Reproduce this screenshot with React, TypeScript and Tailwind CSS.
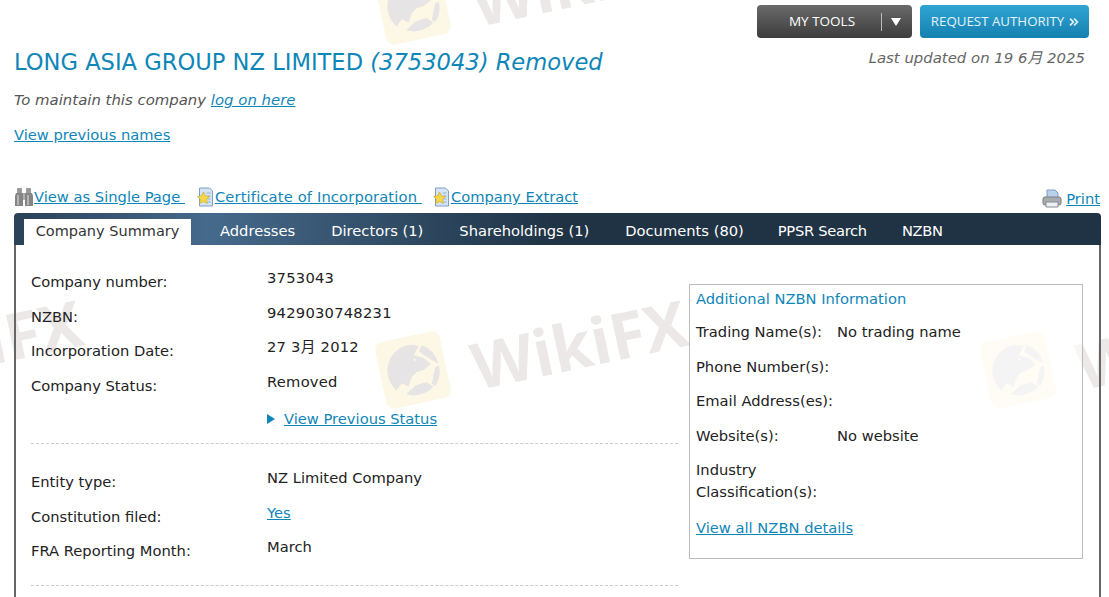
import { ChevronsRight } from "lucide-react";

const summaryRows = [
    { label: "Company number:", value: "3753043" },
    { label: "NZBN:", value: "9429030748231" },
    { label: "Incorporation Date:", value: "27 3月 2012" },
    { label: "Company Status:", value: "Removed" },
]

const entityRows = [
    { label: "Entity type:", value: "NZ Limited Company" },
    { label: "Constitution filed:", value: "Yes", link: true },
    { label: "FRA Reporting Month:", value: "March" },
]

const tabs = [
    { name: "Addresses", className: "" },
    { name: "Directors (1)", className: "" },
    { name: "Shareholdings (1)", className: "" },
    { name: "Documents (80)", className: "" },
    { name: "PPSR Search", className: "-ml-[2px] tracking-[-0.3px]" },
    { name: "NZBN", className: "-ml-[1px] tracking-[-0.3px]" },
]

function Eagle({ className }: { className: string }) {
    return (
        <div className={`absolute h-[68px] w-[66px] rotate-[-12deg] rounded-lg bg-[#fdf7e6] ${className}`}>
            <svg viewBox="0 0 66 70" className="h-full w-full" fill="#e6e4e4">
                <path d="M30 9A27 27 0 0 0 12 52l7-6 6 5 5-9 6-4 8-1 8-4-5-7-10-6 7-8a27 27 0 0 0-14-3z" />
                <path d="M47 12a27 27 0 0 1 13 22l-6-5-11-11z" />
                <path d="M60 36a27 27 0 0 1-8 20l-3-3 7-16z" />
                <path d="M21 58a27 27 0 0 0 29-2l-6-6-12 1z" />
                <circle cx="37" cy="25" r="1.2" fill="#fdf7e6" />
            </svg>
        </div>
    )
}

function Watermark({ className }: { className: string }) {
    return (
        <div className={`absolute font-['Open_Sans',sans-serif] text-[64px] leading-none font-bold whitespace-nowrap text-[#ebe8e7] rotate-[-12deg] ${className}`}>
            WikiFX
        </div>
    )
}

function DocIcon() {
    return (
        <svg viewBox="0 0 18 20" className="h-[20px] w-[19px] shrink-0">
            <path d="M3 1h10l3 3v15H3z" fill="#d5e4f5" stroke="#7f9fc6" />
            <path d="M10 6h4M11 9h3M11 12h3M11 15h3" stroke="#8fb0d6" />
            <path d="M7 5l2 4 4 .5-3 3 1 4-4-2-4 2 1-4-3-3 4-.5z" fill="#f5d84a" stroke="#c8a21c" strokeWidth="0.6" />
        </svg>
    )
}

function BinocularsIcon() {
    return (
        <svg viewBox="0 0 20 20" className="h-[20px] w-[20px] shrink-0">
            <rect x="3" y="1" width="5" height="6" rx="1" fill="#9a9a9a" />
            <rect x="12" y="1" width="5" height="6" rx="1" fill="#9a9a9a" />
            <path d="M2 6h7v13H1V9z" fill="#858585" />
            <path d="M11 6h7l1 3v10h-8z" fill="#858585" />
            <path d="M3 8h2v10H3zM13 8h2v10h-2z" fill="#b5b5b5" />
            <rect x="9" y="6" width="2" height="7" fill="#b0b0b0" />
        </svg>
    )
}

function PrintIcon() {
    return (
        <svg viewBox="0 0 20 20" className="h-[20px] w-[20px] shrink-0">
            <path d="M5 1h8l3 3v5H5z" fill="#b9d0ea" stroke="#7f9cbd" />
            <rect x="1" y="8" width="18" height="8" rx="2" fill="#a8acb0" stroke="#7b7f84" />
            <path d="M4 13h12v5H4z" fill="#eef1f3" stroke="#858b92" />
        </svg>
    )
}

function App() {
    return (
        <div className="relative h-[597px] w-[1109px] overflow-hidden bg-white font-['DejaVu_Sans','Noto_Sans_CJK_SC',sans-serif] text-[14.7px] text-[#222]">
            <Eagle className="left-[380px] top-[-28px]" />
            <Watermark className="left-[470px] top-[-51px]" />
            <Watermark className="left-[-135px] top-[312px]" />
            <Eagle className="left-[380px] top-[336px]" />
            <Watermark className="left-[470px] top-[312px]" />
            <Eagle className="left-[985px] top-[336px]" />
            <Watermark className="left-[1075px] top-[312px]" />

            <div className="relative pr-[8px] pl-[14px]">
                {/* Buttons */}
                <div className="flex h-[47px] justify-end gap-2 pt-[5px] pr-[12px]">
                    <div className="flex h-[33px] w-[155px] items-center rounded-[4px] bg-gradient-to-b from-[#6a6a6a] to-[#3d3d3d] text-white">
                        <span className="w-[124px] pl-[6px] text-center font-['Open_Sans',sans-serif] text-[13.5px]">MY TOOLS</span>
                        <span className="h-[18px] border-l border-[#bbb]" />
                        <span className="ml-[9px] h-0 w-0 border-x-[5px] border-t-[8px] border-x-transparent border-t-white" />
                    </div>
                    <div className="flex h-[33px] w-[169px] items-center justify-center gap-[3px] rounded-[4px] bg-gradient-to-b from-[#2fa5d3] to-[#1480b0] pl-[3px] font-['Open_Sans',sans-serif] text-[13.3px] text-[#e4f3fa]">
                        REQUEST AUTHORITY
                        <ChevronsRight size={14} strokeWidth={3} />
                    </div>
                </div>

                {/* Title */}
                <div className="flex items-start justify-between">
                    <h1 className="text-[22.6px] leading-[30px] text-[#0f86b8]">
                        LONG ASIA GROUP NZ LIMITED <em>(3753043) Removed</em>
                    </h1>
                    <div className="pr-[16px] text-[14.9px] text-[#666] italic">Last updated on 19 6月 2025</div>
                </div>
                <div className="mt-[12px] text-[14.9px] leading-[22px] text-[#555] italic">
                    To maintain this company <a className="text-[#0f86b8] underline">log on here</a>
                </div>
                <div className="mt-[13px] leading-[22px]">
                    <a className="text-[#0f86b8] underline">View previous names</a>
                </div>

                {/* Document links */}
                <div className="mt-[39px] flex h-[24px] items-center leading-[22px] text-[#0f86b8]">
                    <BinocularsIcon />
                    <a className="underline">View as Single Page&nbsp;</a>
                    <span className="ml-[11px]"><DocIcon /></span>
                    <a className="tracking-[0.15px] underline">Certificate of Incorporation&nbsp;</a>
                    <span className="ml-[10px]"><DocIcon /></span>
                    <a className="underline">Company Extract</a>
                    <span className="mt-[3px] ml-auto flex items-center gap-[4px] pr-[1px]">
                        <PrintIcon />
                        <a className="underline">Print</a>
                    </span>
                </div>

                {/* Tabs */}
                <div className="mt-[4px] flex h-[32px] items-end rounded-t-[4px] bg-gradient-to-r from-[#2b4258] from-[0%] via-[#466a8c] via-[18%] to-[#1f3345] to-[50%] pl-[10px] text-white">
                    <div className="flex h-[26px] w-[167px] items-center justify-center bg-white pb-[1px] text-[14.5px] text-[#333]">Company Summary</div>
                    <div className="ml-[29px] flex h-full items-center gap-[36px] pt-[4px]">
                        {tabs.map(tab => (
                            <span key={tab.name} className={tab.className}>{tab.name}</span>
                        ))}
                    </div>
                </div>

                {/* Summary panel */}
                <div className="flex h-[352px] border-x-2 border-[#666] pt-[16px] pl-[15px]">
                    <div className="w-[647px]">
                        {summaryRows.map(row => (
                            <div key={row.label} className="flex h-[34.6px]">
                                <span className="w-[236px] pt-[10px] leading-[22px]">{row.label}</span>
                                <span className="pt-[6px] leading-[22px] tracking-[0.25px]">{row.value}</span>
                            </div>
                        ))}
                        <div className="flex h-[30px] items-center pt-[10px] pl-[236px] text-[#0f86b8]">
                            <span className="mr-[9px] h-0 w-0 border-y-[5px] border-l-[8px] border-y-transparent border-l-[#0f86b8]" />
                            <a className="underline">View Previous Status</a>
                        </div>
                        <div className="mt-[14px] border-t border-dashed border-[#ccc]" />

                        <div className="mt-[17px]">
                            {entityRows.map(row => (
                                <div key={row.label} className="flex h-[34.4px]">
                                    <span className="w-[236px] pt-[10px] leading-[22px]">{row.label}</span>
                                    {row.link ? (
                                        <a className="pt-[6px] leading-[22px] text-[#0f86b8] underline">{row.value}</a>
                                    ) : (
                                        <span className="pt-[6px] leading-[22px]">{row.value}</span>
                                    )}
                                </div>
                            ))}
                        </div>
                        <div className="mt-[20px] border-t border-dashed border-[#ccc]" />
                    </div>

                    {/* NZBN box */}
                    <div className="mt-[23px] ml-[11px] h-[275px] w-[394px] border border-[#bbb] bg-white/60 px-[6px] pt-[2px] leading-[23px]">
                        <div className="text-[#0f86b8]">Additional NZBN Information</div>
                        <div className="mt-[10px] flex h-[34.7px]">
                            <span className="w-[141px]">Trading Name(s):</span>
                            <span>No trading name</span>
                        </div>
                        <div className="h-[34.7px]">Phone Number(s):</div>
                        <div className="h-[34.7px]">Email Address(es):</div>
                        <div className="flex h-[34.7px]">
                            <span className="w-[141px]">Website(s):</span>
                            <span>No website</span>
                        </div>
                        <div className="w-[141px] leading-[22.5px]">Industry Classification(s):</div>
                        <a className="mt-[12px] block text-[#0f86b8] underline">View all NZBN details</a>
                    </div>
                </div>
            </div>
        </div>
    )
}

export default App;
